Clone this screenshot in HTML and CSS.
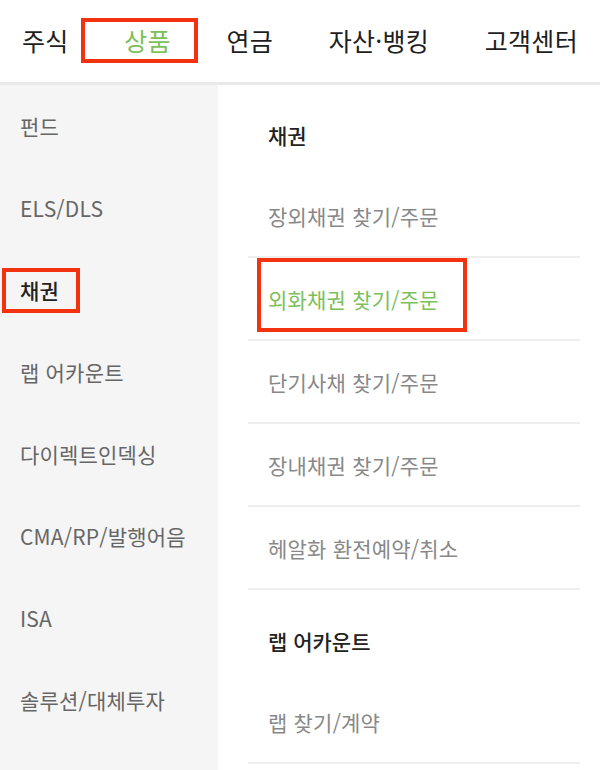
FILE: index.html
```html
<!DOCTYPE html>
<html lang="ko">
<head>
<meta charset="utf-8">
<title>상품 메뉴</title>
<link rel="stylesheet" href="styles.css">
</head>
<body>
<header class="gnb">
  <nav class="gnb-list">
    <a class="gnb-item">주식</a>
    <a class="gnb-item is-active mark-nav">상품</a>
    <a class="gnb-item">연금</a>
    <a class="gnb-item">자산·뱅킹</a>
    <a class="gnb-item">고객센터</a>
  </nav>
</header>
<main class="menu">
  <ul class="depth1">
    <li class="d1-item">펀드</li>
    <li class="d1-item">ELS/DLS</li>
    <li class="d1-item is-active mark-d1">채권</li>
    <li class="d1-item">랩 어카운트</li>
    <li class="d1-item">다이렉트인덱싱</li>
    <li class="d1-item">CMA/RP/발행어음</li>
    <li class="d1-item">ISA</li>
    <li class="d1-item">솔루션/대체투자</li>
  </ul>
  <div class="depth2">
    <section class="group">
      <h2 class="group-title">채권</h2>
      <ul class="d2-list">
        <li class="d2-item">장외채권 찾기/주문</li>
        <li class="d2-item is-active mark-d2">외화채권 찾기/주문</li>
        <li class="d2-item">단기사채 찾기/주문</li>
        <li class="d2-item">장내채권 찾기/주문</li>
        <li class="d2-item">헤알화 환전예약/취소</li>
      </ul>
    </section>
    <section class="group group-next">
      <h2 class="group-title">랩 어카운트</h2>
      <ul class="d2-list">
        <li class="d2-item">랩 찾기/계약</li>
      </ul>
    </section>
  </div>
</main>
</body>
</html>
```

FILE: styles.css
```css
*, *::before, *::after { box-sizing: border-box; }
html, body { margin: 0; padding: 0; }
body {
  width: 600px;
  height: 770px;
  overflow: hidden;
  background: #ffffff;
  font-family: "Noto Sans CJK KR", "Noto Sans", sans-serif;
  color: #222;
}
ul { list-style: none; margin: 0; padding: 0; }
h2 { margin: 0; }

.gnb {
  height: 85px;
  border-bottom: 3px solid #e9e9e9;
  background: #fff;
}
.gnb-list {
  height: 82px;
  display: flex;
  align-items: center;
  justify-content: space-between;
  padding: 0 22px 3px 22px;
}
.gnb-item {
  position: relative;
  font-size: 25px;
  line-height: 30px;
  letter-spacing: 0.3px;
  color: #1e1e1e;
}
.gnb-item.is-active { color: #7cc05a; }

.mark-nav::after {
  content: "";
  position: absolute;
  left: -43px;
  right: -27px;
  top: -7px;
  bottom: -8px;
  border: 4px solid #f3330f;
}

.menu {
  display: flex;
  height: 685px;
}
.depth1 {
  width: 218px;
  flex: none;
  background: #f5f5f5;
}
.d1-item {
  position: relative;
  height: 82px;
  display: flex;
  align-items: center;
  padding-left: 20px;
  font-size: 21px;
  letter-spacing: 0.2px;
  color: #666;
}
.d1-item.is-active { color: #222; font-weight: 500; }
.mark-d1::after {
  content: "";
  position: absolute;
  left: 2px;
  top: 19px;
  width: 78px;
  height: 45px;
  border: 4px solid #f3330f;
}

.depth2 {
  flex: 1;
  padding: 10px 20px 0 30px;
}
.group-title {
  height: 80px;
  display: flex;
  align-items: center;
  padding-left: 20px;
  font-size: 21px;
  font-weight: 500;
  color: #222;
}
.group-next { margin-top: 11px; }
.d2-item {
  position: relative;
  height: 83px;
  display: flex;
  align-items: center;
  padding-left: 20px;
  border-bottom: 2px solid #eeeeee;
  font-size: 21px;
  letter-spacing: 0.2px;
  color: #888;
}
.d2-item.is-active { color: #7cc05a; }
.mark-d2::after {
  content: "";
  position: absolute;
  left: 9px;
  top: 0;
  width: 210px;
  height: 74px;
  border: 4px solid #f3330f;
}
```
